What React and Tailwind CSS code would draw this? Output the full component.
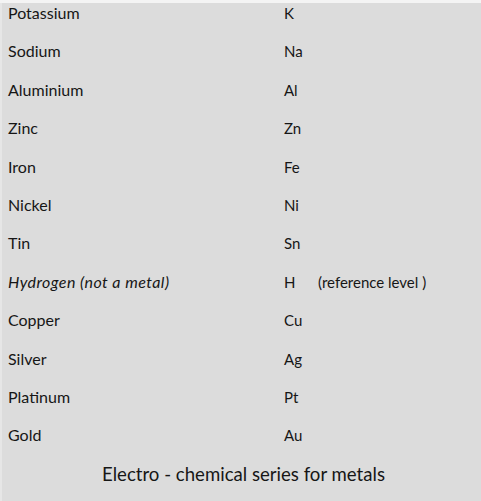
export default function App() {
  const rows = [
    ["Potassium", "K"],
    ["Sodium", "Na"],
    ["Aluminium", "Al"],
    ["Zinc", "Zn"],
    ["Iron", "Fe"],
    ["Nickel", "Ni"],
    ["Tin", "Sn"],
    ["Hydrogen (not a metal)", "H", "(reference level )"],
    ["Copper", "Cu"],
    ["Silver", "Ag"],
    ["Platinum", "Pt"],
    ["Gold", "Au"],
  ];
  return (
    <div className="w-[481px] h-[501px] bg-[#f4f4f4] pt-[3px] overflow-hidden" style={{ fontFamily: "Lato, 'Open Sans', sans-serif" }}>
      <div className="h-[498px] bg-[#dcdcdc] border-l-2 border-[#e6e6e6] text-[#161616] flex flex-col gap-[18.4px] pl-[6px]">
        {rows.map(([name, sym, note], i) => (
          <div key={i} className="flex items-center h-[20px] text-[15px] leading-[20px]">
            <span className={"w-[276px] text-[16px] " + (i === 7 ? "italic tracking-[0.45px]" : "")}>{name}</span>
            <span className="w-[34px]">{sym}</span>
            {note && <span>{note}</span>}
          </div>
        ))}
        <div className="h-[20px] leading-[20px] text-[18.6px] text-center pr-[2px]">Electro - chemical series for metals</div>
      </div>
    </div>
  );
}
